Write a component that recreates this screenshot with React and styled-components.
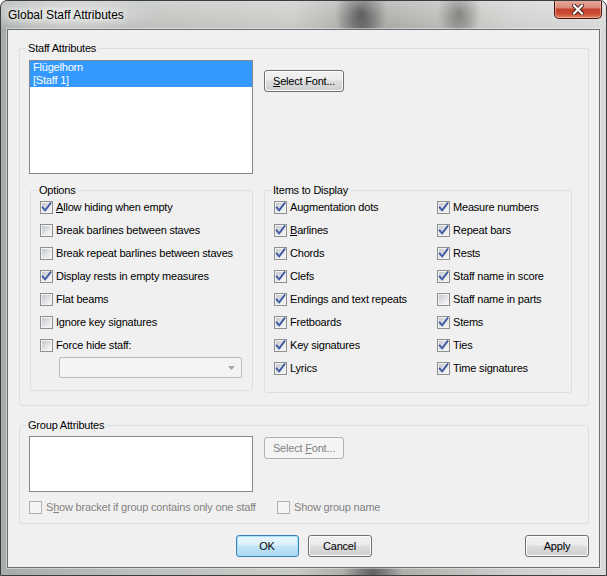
import React from "react";
import styled, { createGlobalStyle } from "styled-components";

const GlobalStyle = createGlobalStyle`
  html, body {
    margin: 0;
    padding: 0;
    background: #ffffff;
  }
  body {
    font-family: "Liberation Sans", Arial, sans-serif;
    font-size: 11px;
    letter-spacing: -0.2px;
    color: #000;
  }
`;

const FONT = `"Liberation Sans", Arial, sans-serif`;

const Window = styled.div`
  width: 607px;
  height: 576px;
  box-sizing: border-box;
  border: 1px solid #3b3e40;
  border-radius: 7px 7px 0 0;
  padding: 0 6px 7px;
  display: flex;
  flex-direction: column;
  overflow: hidden;
  background:
    linear-gradient(180deg, rgba(255, 255, 255, 0.28), rgba(255, 255, 255, 0) 26px),
    radial-gradient(26px 32px at 360px 12px, rgba(45, 45, 44, 0.8), rgba(45, 45, 44, 0)),
    radial-gradient(22px 28px at 458px 12px, rgba(60, 60, 58, 0.6), rgba(60, 60, 58, 0)),
    radial-gradient(30px 24px at 372px 572px, rgba(40, 40, 40, 0.55), rgba(40, 40, 40, 0)),
    radial-gradient(90px 20px at 64px 14px, rgba(255, 255, 255, 0.6), rgba(255, 255, 255, 0)),
    linear-gradient(90deg, #a9ada9 0%, #bdc0bc 22%, #c9cbc7 48%, #a3a5a1 60%, #b5b6b2 70%, #cfcfcd 84%, #dadada 100%);
`;

const TitleBar = styled.div`
  height: 28px;
  margin: 0 -6px;
  padding: 0 4px 0 7px;
  display: flex;
  justify-content: space-between;
  align-items: flex-start;
  flex-shrink: 0;
`;

const Title = styled.div`
  padding-top: 7px;
  font-family: ${FONT};
  font-size: 12px;
  line-height: 15px;
  letter-spacing: 0;
  color: #000;
  text-shadow: 0 0 6px rgba(255, 255, 255, 0.95), 0 0 10px rgba(255, 255, 255, 0.8);
`;

const CloseButton = styled.div`
  width: 48px;
  height: 19px;
  box-sizing: border-box;
  margin-top: -1px;
  border: 1px solid #4a1910;
  border-top: none;
  border-radius: 0 0 5px 5px;
  display: flex;
  align-items: center;
  justify-content: center;
  background: linear-gradient(180deg, #e7ab9d 0%, #d98c7b 42%, #c2412b 52%, #cc4e34 78%, #e08a68 100%);
  box-shadow: inset 0 0 0 1px rgba(255, 210, 200, 0.45);
`;

const Client = styled.div`
  flex: 1;
  border: 1px solid #6a6f74;
  box-shadow: 0 0 0 1px rgba(255, 255, 255, 0.4);
  background: #f0f0f0;
  padding: 12px 10px 0 11px;
  display: flex;
  flex-direction: column;
`;

const Group = styled.fieldset`
  margin: ${p => p.$mt || 0}px 0 0 ${p => p.$ml || 0}px;
  padding: 0;
  border: 1px solid #d5dfe5;
  border-radius: 3px;
  min-width: 0;
  width: ${p => (p.$w ? `${p.$w}px` : "auto")};
  box-sizing: border-box;
  flex-shrink: 0;
`;

const Legend = styled.legend`
  margin-left: 6px;
  padding: 0 2px;
  font-size: 11px;
  line-height: 13px;
  color: #000;
`;

const GroupBody = styled.div`
  padding: ${p => p.$pad};
  display: flex;
  flex-direction: column;
`;

const Row = styled.div`
  display: flex;
  align-items: flex-start;
  margin-top: ${p => p.$mt || 0}px;
`;

const ListBox = styled.div`
  width: 224px;
  height: ${p => p.$h}px;
  box-sizing: border-box;
  border: 1px solid #828790;
  background: #ffffff;
  padding: 0;
  flex-shrink: 0;
`;

const ListItem = styled.div`
  height: 13px;
  line-height: 13px;
  padding-left: 3px;
  font-size: 11px;
  color: ${p => (p.$selected ? "#ffffff" : "#000")};
  background: ${p => (p.$selected ? "#3399ff" : "transparent")};
  white-space: nowrap;
`;

const Button = styled.button`
  width: ${p => p.$w || 63}px;
  height: 22px;
  box-sizing: border-box;
  margin: ${p => p.$m || 0};
  padding: 0;
  font-family: ${FONT};
  font-size: 11px;
  letter-spacing: -0.2px;
  color: ${p => (p.disabled ? "#838383" : "#000")};
  border: 1px solid ${p => (p.disabled ? "#adb2b5" : p.$default ? "#3c7fb1" : "#707070")};
  border-radius: 3px;
  flex-shrink: 0;
  background: ${p =>
    p.disabled
      ? "#f4f4f4"
      : p.$default
      ? "linear-gradient(180deg, #e8f5fc 0%, #dcf0fb 45%, #c2e5f8 50%, #a9d9f3 100%)"
      : "linear-gradient(180deg, #f2f2f2 0%, #ebebeb 45%, #dddddd 50%, #cfcfcf 100%)"};
  box-shadow: ${p =>
    p.disabled ? "none" : p.$default ? "inset 0 0 0 1px #a6e2ff" : "inset 0 0 0 1px #fcfcfc"};
`;

const U = styled.span`
  text-decoration: underline;
  text-underline-offset: 1px;
`;

const OptionsList = styled.div`
  display: grid;
  grid-auto-rows: 20px;
  row-gap: 3px;
`;

const ItemsGrid = styled.div`
  display: grid;
  grid-template-columns: 163px auto;
  grid-template-rows: repeat(8, 20px);
  grid-auto-flow: column;
  row-gap: 3px;
`;

const Choice = styled.label`
  display: flex;
  align-items: center;
  gap: ${p => p.$gap || 3}px;
  font-size: 11px;
  line-height: 13px;
  white-space: nowrap;
  color: ${p => (p.$disabled ? "#838383" : "#000")};
`;

const Box = styled.span`
  width: 13px;
  height: 13px;
  box-sizing: border-box;
  flex-shrink: 0;
  border: 1px solid ${p => (p.$disabled ? "#b1b1b1" : "#8e8f8f")};
  background: ${p =>
    p.$disabled
      ? "#f4f4f4"
      : "linear-gradient(135deg, #bcc1c8 0%, #dcdee1 45%, #efefef 75%, #f6f6f6 100%)"};
  box-shadow: inset 0 0 0 1px ${p => (p.$disabled ? "#f4f4f4" : "#f3f3f3")};
  display: flex;
  align-items: center;
  justify-content: center;
`;

const Combo = styled.div`
  width: 183px;
  height: 21px;
  box-sizing: border-box;
  margin: 2px 0 0 19px;
  border: 1px solid #b8bcbf;
  border-radius: 2px;
  background: #f4f4f4;
  display: flex;
  align-items: center;
  justify-content: flex-end;
  padding-right: 6px;
`;

const CheckRow = styled.div`
  display: grid;
  grid-template-columns: 248px auto;
  height: 20px;
  align-items: center;
  margin-top: 5px;
`;

const ButtonBar = styled.div`
  display: grid;
  grid-template-columns: 1fr auto 1fr;
  align-items: center;
  margin: 11px -10px 0 -11px;
`;

const CenterButtons = styled.div`
  display: flex;
  gap: 9px;
  grid-column: 2;
`;

const RightButtons = styled.div`
  grid-column: 3;
  display: flex;
  justify-content: flex-end;
  padding-right: 10px;
`;

const CheckMark = () => (
  <svg width="11" height="11" viewBox="0 0 11 11" style={{ overflow: "visible" }}>
    <path d="M1.7 5.5 L4.2 8.3 L9.5 1.3" fill="none" stroke="#3a56a0" strokeWidth="1.9" strokeLinecap="square" strokeLinejoin="miter" />
    <path d="M2.5 5.7 L4.2 7.4" fill="none" stroke="#7d93cf" strokeWidth="0.7" />
  </svg>
);

const Label = ({ text, u }) => {
  if (u === undefined) return <span>{text}</span>;
  return (
    <span>
      {text.slice(0, u)}
      <U>{text[u]}</U>
      {text.slice(u + 1)}
    </span>
  );
};

const CheckBox = ({ label, checked, u, disabled, gap }) => (
  <Choice $disabled={disabled} $gap={gap}>
    <Box $disabled={disabled}>{checked && <CheckMark />}</Box>
    <Label text={label} u={u} />
  </Choice>
);

const options = [
  { label: "Allow hiding when empty", checked: true, u: 0 },
  { label: "Break barlines between staves" },
  { label: "Break repeat barlines between staves" },
  { label: "Display rests in empty measures", checked: true },
  { label: "Flat beams" },
  { label: "Ignore key signatures" },
  { label: "Force hide staff:" },
];

const items = [
  { label: "Augmentation dots", checked: true },
  { label: "Barlines", checked: true, u: 0 },
  { label: "Chords", checked: true },
  { label: "Clefs", checked: true },
  { label: "Endings and text repeats", checked: true },
  { label: "Fretboards", checked: true },
  { label: "Key signatures", checked: true },
  { label: "Lyrics", checked: true },
  { label: "Measure numbers", checked: true },
  { label: "Repeat bars", checked: true },
  { label: "Rests", checked: true },
  { label: "Staff name in score", checked: true },
  { label: "Staff name in parts" },
  { label: "Stems", checked: true },
  { label: "Ties", checked: true },
  { label: "Time signatures", checked: true },
];

export default function App() {
  return (
    <>
      <GlobalStyle />
      <Window>
        <TitleBar>
          <Title>Global Staff Attributes</Title>
          <CloseButton>
            <svg width="12" height="11" viewBox="0 0 12 11">
              <path d="M2 1.5 L10 9.5 M10 1.5 L2 9.5" stroke="#3a1610" strokeWidth="4" strokeLinecap="square" />
              <path d="M2 1.5 L10 9.5 M10 1.5 L2 9.5" stroke="#ffffff" strokeWidth="2.2" strokeLinecap="square" />
            </svg>
          </CloseButton>
        </TitleBar>

        <Client>
          <Group>
            <Legend>Staff Attributes</Legend>
            <GroupBody $pad="5px 0 12px 9px">
              <Row>
                <ListBox $h={114}>
                  <ListItem $selected>Flügelhorn</ListItem>
                  <ListItem $selected>[Staff 1]</ListItem>
                </ListBox>
                <Button $w={80} $m="10px 0 0 11px">
                  <U>S</U>elect Font...
                </Button>
              </Row>
              <Row $mt={10}>
                <Group $ml={1} $w={223}>
                  <Legend>Options</Legend>
                  <GroupBody $pad="0 0 12px 9px">
                    <OptionsList>
                      {options.map(o => (
                        <CheckBox key={o.label} {...o} />
                      ))}
                    </OptionsList>
                    <Combo>
                      <svg width="7" height="4" viewBox="0 0 7 4">
                        <path d="M0 0 H7 L3.5 4 Z" fill="#a7a7a7" />
                      </svg>
                    </Combo>
                  </GroupBody>
                </Group>
                <Group $ml={11} $w={308}>
                  <Legend>Items to Display</Legend>
                  <GroupBody $pad="0 0 14px 9px">
                    <ItemsGrid>
                      {items.map(o => (
                        <CheckBox key={o.label} {...o} />
                      ))}
                    </ItemsGrid>
                  </GroupBody>
                </Group>
              </Row>
            </GroupBody>
          </Group>

          <Group $mt={13}>
            <Legend>Group Attributes</Legend>
            <GroupBody $pad="4px 0 6px 9px">
              <Row>
                <ListBox $h={56} />
                <Button disabled $w={80} $m="1px 0 0 11px">
                  Select <U>F</U>ont...
                </Button>
              </Row>
              <CheckRow>
                <CheckBox disabled gap={4} label="Show bracket if group contains only one staff" u={1} />
                <CheckBox disabled gap={4} label="Show group name" />
              </CheckRow>
            </GroupBody>
          </Group>

          <ButtonBar>
            <CenterButtons>
              <Button $default>OK</Button>
              <Button $w={64}>Cancel</Button>
            </CenterButtons>
            <RightButtons>
              <Button $w={64}>Apply</Button>
            </RightButtons>
          </ButtonBar>
        </Client>
      </Window>
    </>
  );
}
